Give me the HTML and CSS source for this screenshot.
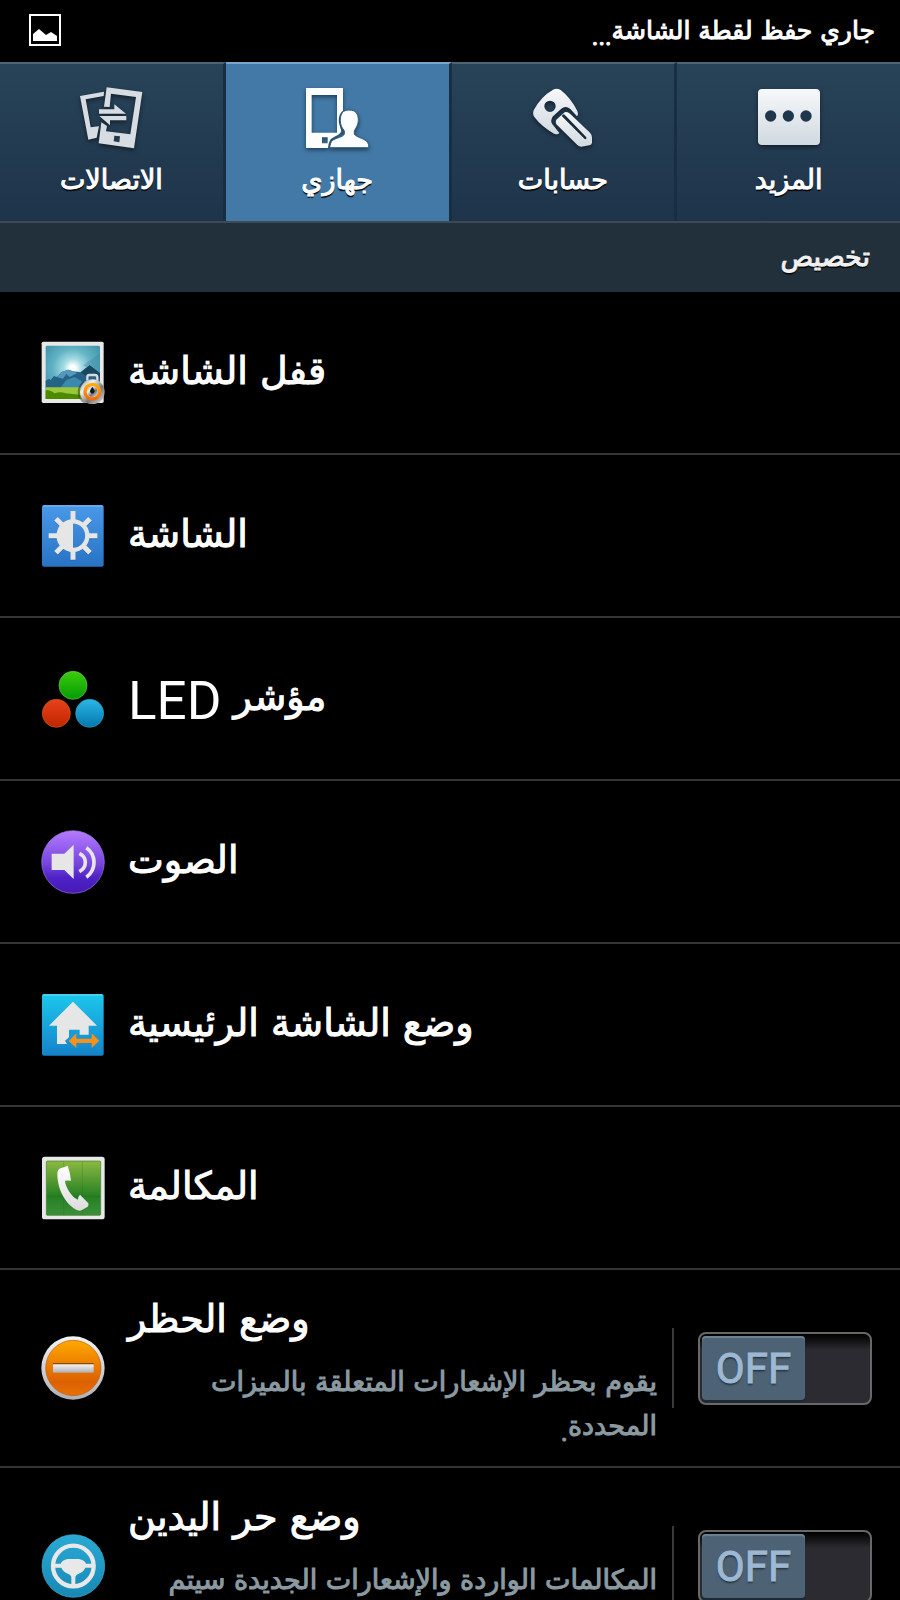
FILE: index.html
```html
<!DOCTYPE html>
<html lang="ar">
<head>
    <meta charset="UTF-8">
    <meta name="viewport" content="width=device-width, initial-scale=1.0">
    <title>الإعدادات - جهازي</title>
    <link rel="stylesheet" href="styles.css">
</head>
<body>
    <header class="status-bar">
        <svg class="status-icon" viewBox="0 0 32 32" aria-hidden="true">
            <rect x="1" y="1" width="30" height="30" fill="none" stroke="#fff" stroke-width="2"/>
            <path d="M4 27V20L10 15L17 21L22 18L28 22V27Z" fill="#fff"/>
        </svg>
        <span class="status-text" dir="rtl">جاري حفظ لقطة الشاشة<span class="punct">...</span></span>
    </header>

    <nav class="tabs" role="tablist">
        <button class="tab" role="tab" aria-selected="false">
            <svg class="tab-icon" viewBox="237 258 192 192" aria-hidden="true">
                <g fill="#d6dce1">
                    <path fill-rule="evenodd" d="M240 288L312 275L311 288L257 298L272 382L297 379L290 413L265 419Z"/>
                    <path d="M320 262L427 276L402 445L296 430L304 367L321 378L318 394L391 403L408 291L333 281L329 321L312 320Z"/>
                    <path d="M297 328H343V313L378 341H297Z"/>
                    <path d="M298 348H379V361H330V376Z"/>
                </g>
                <path d="M343 407L360 409L358 427L341 424Z" fill="#22394e"/>
            </svg>
            <span class="tab-label" dir="rtl">الاتصالات</span>
        </button>
        <button class="tab active" role="tab" aria-selected="true">
            <svg class="tab-icon" viewBox="912 258 192 192" aria-hidden="true">
                <path fill="#fbfdff" fill-rule="evenodd" d="M915 264H1026V332C1016 340 1012 352 1014 370L1021 393C1018 405 1000 408 989 418C984 426 982 434 981 444H915ZM932 285V398H1008V285ZM963 412V430H980V412Z"/>
                <path fill="#fbfdff" stroke="#2f5f86" stroke-width="3" d="M1044 330C1064 330 1072 341 1072 361C1072 377 1063 385 1060 393V402C1066 412 1085 414 1096 423C1102 429 1104 436 1103 443H986C988 433 989 425 996 420C1008 413 1024 412 1030 403V393C1024 384 1018 377 1018 361C1018 341 1026 330 1044 330Z"/>
            </svg>
            <span class="tab-label" dir="rtl">جهازي</span>
        </button>
        <button class="tab" role="tab" aria-selected="false">
            <svg class="tab-icon" viewBox="237 258 192 192" aria-hidden="true">
                <defs>
                    <linearGradient id="silver" x1="0" y1="0" x2="0" y2="1">
                        <stop offset="0" stop-color="#f7f8fa"/>
                        <stop offset="1" stop-color="#d0d9e0"/>
                    </linearGradient>
                </defs>
                <path fill="url(#silver)" fill-rule="evenodd" d="M303 269Q314 263 326 270Q355 292 376 333Q380 343 375 349L355 327Q341 316 328 326L303 349Q294 360 300 371L322 399Q317 405 306 401Q269 380 247 351Q241 342 245 331Q266 290 303 269ZM294 302A17 17 0 1 0 294 336A17 17 0 1 0 294 302Z"/>
                <path fill="url(#silver)" fill-rule="evenodd" d="M313 359L338 337Q346 333 354 341L414 398Q420 404 420 413V428Q419 434 412 436L388 440Q381 440 376 435L313 373Q309 366 313 359ZM329 348L398 417Q404 420 403 412L338 344Q333 341 329 348Z"/>
            </svg>
            <span class="tab-label" dir="rtl">حسابات</span>
        </button>
        <button class="tab" role="tab" aria-selected="false">
            <svg class="tab-icon" viewBox="917 258 192 192" aria-hidden="true">
                <rect x="920" y="267" width="186" height="168" rx="12" fill="url(#silver)"/>
                <g fill="#1f374c">
                    <circle cx="958" cy="348" r="17"/>
                    <circle cx="1011" cy="348" r="17"/>
                    <circle cx="1064" cy="348" r="17"/>
                </g>
            </svg>
            <span class="tab-label" dir="rtl">المزيد</span>
        </button>
    </nav>

    <main class="settings">
        <h2 class="section-title" dir="rtl">تخصيص</h2>

        <ul class="list">
            <li>
                <a class="row" href="#lock">
                    <svg class="icon" viewBox="64 69 192 192" aria-hidden="true">
                        <defs>
                            <radialGradient id="sky" cx="0.5" cy="0.42" r="0.6">
                                <stop offset="0.08" stop-color="#fff"/>
                                <stop offset="0.28" stop-color="#a5dce4"/>
                                <stop offset="0.6" stop-color="#62b3c4"/>
                                <stop offset="1" stop-color="#4497ae"/>
                            </radialGradient>
                            <linearGradient id="steel" x1="0" y1="0" x2="1" y2="1">
                                <stop offset="0" stop-color="#8c8c8c"/>
                                <stop offset="0.3" stop-color="#f2f2f2"/>
                                <stop offset="0.6" stop-color="#777"/>
                                <stop offset="1" stop-color="#e4e4e4"/>
                            </linearGradient>
                            <linearGradient id="ring" x1="0" y1="0" x2="0" y2="1">
                                <stop offset="0" stop-color="#ffac0c"/>
                                <stop offset="1" stop-color="#f66b00"/>
                            </linearGradient>
                        </defs>
                        <rect x="66" y="71" width="186" height="184" rx="5" fill="#e8e8e8"/>
                        <rect x="78" y="83" width="163" height="160" rx="4" fill="url(#sky)"/>
                        <path d="M190 142L241 106V170Z" fill="#3a87a0" opacity="0.4"/>
                        <path d="M78 188L88 182L92 187L103 174L112 177L126 162L145 155L160 160L183 163L210 142L241 166V210H78Z" fill="#256386"/>
                        <path d="M112 177L126 162L145 155L160 160L173 165L150 177L140 168L130 182Z" fill="#5499bb"/>
                        <path d="M140 186L165 177L190 193L205 180L213 210H122Z" fill="#3c88ae"/>
                        <path d="M183 163L210 142L241 166V182L222 166L203 177Z" fill="#1b4660"/>
                        <path d="M78 208H241V243H78Z" fill="#9bc83a"/>
                        <path d="M78 216Q95 217 105 226Q122 220 138 226L180 230V243H78Z" fill="#4e8a00"/>
                        <circle cx="213" cy="222" r="39" fill="#000" opacity="0.35"/>
                        <path d="M203 188V177Q203 171 209 171H226Q233 171 233 178V188" fill="none" stroke="#d5dadd" stroke-width="7"/>
                        <circle cx="218" cy="221" r="37" fill="url(#steel)"/>
                        <circle cx="218" cy="221" r="22" fill="#ddd" stroke="url(#ring)" stroke-width="10"/>
                        <circle cx="218" cy="221" r="16" fill="url(#steel)"/>
                        <path d="M218 206Q222 211 224 216A7 7 0 1 1 212 216Q214 211 218 206Z" fill="#161616"/>
                    </svg>
                    <span class="title" dir="rtl">قفل الشاشة</span>
                </a>
            </li>
            <li>
                <a class="row" href="#display">
                    <svg class="icon" viewBox="64 555 192 192" aria-hidden="true">
                        <defs>
                            <linearGradient id="blue" x1="0" y1="0" x2="0" y2="1">
                                <stop offset="0" stop-color="#4a99e8"/>
                                <stop offset="1" stop-color="#2873c4"/>
                            </linearGradient>
                        </defs>
                        <rect x="67" y="558" width="185" height="185" rx="6" fill="url(#blue)"/>
                        <path d="M71 561H248" stroke="#83b9f0" stroke-width="3"/>
                        <g stroke="#1c5591" stroke-width="15" transform="translate(0 3)" opacity="0.4">
                            <path d="M160 576V606M160 692V722M88 650H118M202 650H232M109 599L130 620M190 680L211 701M109 701L130 680M190 620L211 599"/>
                        </g>
                        <path d="M160 576V606M160 692V722M87 650H118M202 650H233M109 599L130 620M190 680L211 701M109 701L130 680M190 620L211 599" stroke="#e6e6e6" stroke-width="15"/>
                        <circle cx="160" cy="650" r="43" fill="none" stroke="#e6e6e6" stroke-width="13"/>
                        <path d="M160 606A44 44 0 0 0 160 694Z" fill="#e6e6e6"/>
                    </svg>
                    <span class="title" dir="rtl">الشاشة</span>
                </a>
            </li>
            <li>
                <a class="row" href="#led">
                    <svg class="icon" viewBox="64 84 192 192" aria-hidden="true">
                        <defs>
                            <linearGradient id="green" x1="0" y1="0" x2="0" y2="1">
                                <stop offset="0" stop-color="#3ccb0b"/>
                                <stop offset="1" stop-color="#049c05"/>
                            </linearGradient>
                            <linearGradient id="red" x1="0" y1="0" x2="0" y2="1">
                                <stop offset="0" stop-color="#e7421b"/>
                                <stop offset="1" stop-color="#c02500"/>
                            </linearGradient>
                            <linearGradient id="cyan" x1="0" y1="0" x2="0" y2="1">
                                <stop offset="0" stop-color="#2bb7e6"/>
                                <stop offset="1" stop-color="#0377ad"/>
                            </linearGradient>
                        </defs>
                        <circle cx="160" cy="139" r="42" fill="url(#green)" stroke="#68c94a" stroke-width="2"/>
                        <circle cx="110" cy="223" r="42" fill="url(#red)" stroke="#e0570a" stroke-width="2"/>
                        <circle cx="210" cy="223" r="42" fill="url(#cyan)" stroke="#2fa3b8" stroke-width="2"/>
                    </svg>
                    <span class="title" dir="rtl">مؤشر <span class="latin">LED</span></span>
                </a>
            </li>
            <li>
                <a class="row" href="#sound">
                    <svg class="icon" viewBox="64 571 192 192" aria-hidden="true">
                        <defs>
                            <linearGradient id="violet" x1="0" y1="0" x2="0" y2="1">
                                <stop offset="0" stop-color="#b57bff"/>
                                <stop offset="0.55" stop-color="#7442dc"/>
                                <stop offset="0.75" stop-color="#4e22c6"/>
                                <stop offset="1" stop-color="#4719b8"/>
                            </linearGradient>
                        </defs>
                        <circle cx="160" cy="667" r="94" fill="url(#violet)" stroke="#9a77e0" stroke-width="2"/>
                        <path d="M96 642H134L162 615V718L134 691H96Z" fill="#e6e6e6"/>
                        <path d="M179 641Q197 650 197 668Q197 686 179 696M200 624Q223 640 223 668Q223 696 200 713" fill="none" stroke="#e6e6e6" stroke-width="11"/>
                    </svg>
                    <span class="title" dir="rtl">الصوت</span>
                </a>
            </li>
            <li>
                <a class="row" href="#home">
                    <svg class="icon" viewBox="64 67 192 192" aria-hidden="true">
                        <defs>
                            <linearGradient id="aqua" x1="0" y1="0" x2="0" y2="1">
                                <stop offset="0" stop-color="#1cc8ec"/>
                                <stop offset="1" stop-color="#1582ca"/>
                            </linearGradient>
                        </defs>
                        <rect x="67" y="70" width="185" height="185" rx="6" fill="url(#aqua)"/>
                        <path d="M71 73H248" stroke="#6fdcf3" stroke-width="3"/>
                        <path d="M160 93L232 165H207V192H180V177H148V200L136 210L142 220H112V165H88Z" fill="#e6e6e6"/>
                        <path d="M147 211L170 188V204H216V188L239 210L216 232V217H170V232Z" fill="#f6911c"/>
                    </svg>
                    <span class="title" dir="rtl">وضع الشاشة الرئيسية</span>
                </a>
            </li>
            <li>
                <a class="row" href="#call">
                    <svg class="icon" viewBox="64 555 192 192" aria-hidden="true">
                        <defs>
                            <linearGradient id="leaf" x1="0" y1="0" x2="0" y2="1">
                                <stop offset="0" stop-color="#8cb941"/>
                                <stop offset="0.65" stop-color="#258023"/>
                                <stop offset="1" stop-color="#3c8f39"/>
                            </linearGradient>
                            <linearGradient id="phone" x1="0" y1="0" x2="0" y2="1">
                                <stop offset="0" stop-color="#fff"/>
                                <stop offset="1" stop-color="#dcdcdc"/>
                            </linearGradient>
                        </defs>
                        <rect x="67" y="557" width="188" height="188" rx="8" fill="#e8e8e8"/>
                        <rect x="80" y="570" width="163" height="163" rx="3" fill="url(#leaf)" stroke="#3f7d26" stroke-width="2"/>
                        <path d="M132 571V732M188 571V732M81 677H242" stroke="#1c5c1a" stroke-width="2" opacity="0.3"/>
                        <path d="M144 584Q136 587 123 592Q113 596 113 608C113 661 143 704 174 718Q181 721 187 717L204 707Q208 704 206 697L181 671Q175 676 175 686C156 679 137 647 136 629Q145 628 154 629Q152 605 144 584Z" fill="url(#phone)"/>
                    </svg>
                    <span class="title" dir="rtl">المكالمة</span>
                </a>
            </li>
            <li class="row tall">
                <svg class="icon" viewBox="123 224 192 192" aria-hidden="true">
                    <defs>
                        <linearGradient id="orange" x1="0" y1="0" x2="0" y2="1">
                            <stop offset="0" stop-color="#ffa900"/>
                            <stop offset="0.75" stop-color="#dc6000"/>
                            <stop offset="1" stop-color="#e77107"/>
                        </linearGradient>
                        <linearGradient id="rim" x1="0" y1="0" x2="0" y2="1">
                            <stop offset="0" stop-color="#f4f4f4"/>
                            <stop offset="1" stop-color="#aeb0b6"/>
                        </linearGradient>
                    </defs>
                    <circle cx="219" cy="320" r="95" fill="url(#rim)"/>
                    <circle cx="220" cy="320" r="83" fill="url(#orange)" stroke="#c05a10" stroke-width="2"/>
                    <rect x="159" y="305" width="122" height="5" fill="#8f4a05"/>
                    <rect x="159" y="309" width="122" height="25" fill="url(#rim)"/>
                </svg>
                <div class="text">
                    <span class="title" dir="rtl" id="blocking">وضع الحظر</span>
                    <p class="summary" dir="rtl">يقوم بحظر الإشعارات المتعلقة بالميزات المحددة<span class="punct">.</span></p>
                </div>
                <div class="switch-box">
                    <button class="switch" role="switch" aria-checked="false" aria-labelledby="blocking"><span class="thumb">OFF</span></button>
                </div>
            </li>
            <li class="row tall">
                <svg class="icon" viewBox="123 823 192 192" aria-hidden="true">
                    <defs>
                        <linearGradient id="teal" x1="0" y1="0" x2="0" y2="1">
                            <stop offset="0" stop-color="#2aa9d5"/>
                            <stop offset="1" stop-color="#1788b4"/>
                        </linearGradient>
                    </defs>
                    <circle cx="220" cy="919" r="94" fill="url(#teal)" stroke="#4aa9c7" stroke-width="2"/>
                    <circle cx="220" cy="919" r="61" fill="none" stroke="#e8e8e8" stroke-width="13"/>
                    <path d="M164 912H182Q186 901 203 898H237Q254 901 258 912H276V924H256Q250 937 236 942Q226 946 226 954V982H214V954Q214 946 204 942Q190 937 184 924H164Z" fill="#e8e8e8"/>
                </svg>
                <div class="text">
                    <span class="title" dir="rtl" id="handsfree">وضع حر اليدين</span>
                    <p class="summary" dir="rtl">المكالمات الواردة والإشعارات الجديدة سيتم</p>
                </div>
                <div class="switch-box">
                    <button class="switch" role="switch" aria-checked="false" aria-labelledby="handsfree"><span class="thumb">OFF</span></button>
                </div>
            </li>
        </ul>
    </main>
</body>
</html>
```
FILE: styles.css
```css
* {
    box-sizing: border-box;
}
body {
    margin: 0;
    height: 100vh;
    overflow: hidden;
    background: #000;
    color: #fff;
    font-family: "DejaVu Sans", sans-serif;
    -webkit-text-stroke: 1px;
}
.status-bar {
    display: flex;
    align-items: center;
    justify-content: space-between;
    height: 62px;
    padding: 0 25px 2px 29px;
}
.status-icon {
    width: 32px;
    height: 32px;
}
.status-text {
    font-size: 25px;
}
.punct {
    font-family: Roboto, sans-serif;
    line-height: 0;
    vertical-align: sub;
}
.tabs {
    display: flex;
    height: 161px;
    border-bottom: 2px solid #3c4a56;
}
.tab {
    flex: 1;
    display: flex;
    flex-direction: column;
    align-items: center;
    gap: 10px;
    padding: 22px 0 0;
    border: 0;
    border-top: 2px solid #4d6475;
    border-right: 3px solid #182e42;
    background: linear-gradient(#284358, #1e344b);
    color: #fff;
    font-family: inherit;
    font-size: 27px;
}
.tab:last-child {
    border-right: 0;
}
.tab.active {
    background: #4279a7;
    border-top-color: #7ea5c6;
}
.tab-icon {
    width: 64px;
    height: 64px;
    filter: drop-shadow(0 2px 2px rgba(0,0,0,0.5));
}
.tab-label {
    line-height: 40px;
    text-shadow: 0 2px 1px #000;
}
.section-title {
    margin: 0;
    height: 69px;
    padding: 0 30px;
    background: #22303c;
    color: #f0f0f0;
    font-size: 27px;
    font-weight: normal;
    line-height: 68px;
    text-shadow: 0 2px 1px #000;
}
.list {
    list-style: none;
    margin: 0;
    padding: 0;
}
.row {
    display: flex;
    align-items: center;
    gap: 23px;
    min-height: 163px;
    padding: 0 28px 0 41px;
    border-bottom: 2px solid #353535;
    color: #fff;
    text-decoration: none;
}
.icon {
    flex: none;
    width: 64px;
    height: 64px;
}
.title {
    padding-bottom: 3px;
    font-size: 38px;
    line-height: 60px;
}
.latin {
    font-family: Roboto, sans-serif;
    font-size: 53px;
    line-height: 0;
    vertical-align: sub;
    -webkit-text-stroke: 0;
}
.tall {
    min-height: 198px;
}
.text {
    flex: 1;
    align-self: flex-start;
    padding-top: 19px;
}
.text .title {
    display: block;
    text-align: left;
}
.summary {
    margin: 8px 0 0;
    color: #8b9aa1;
    font-size: 27px;
    line-height: 44px;
}
.switch-box {
    display: flex;
    align-items: center;
    height: 80px;
    margin-left: -8px;
    padding-left: 24px;
    border-left: 2px solid #3a3a3a;
}
.switch {
    display: flex;
    width: 174px;
    height: 73px;
    padding: 2px;
    border: 2px solid #686868;
    border-radius: 8px;
    background: linear-gradient(#000, #2b2b31 16px);
}
.thumb {
    width: 103px;
    height: 64px;
    border-radius: 4px;
    background: #4d6375;
    box-shadow: inset 0 2px 1px #6d8293, 0 2px 1px #1c2a35;
    color: #9db8d3;
    font-family: Roboto, sans-serif;
    font-size: 42px;
    line-height: 66px;
    text-align: center;
    text-shadow: 0 2px 2px #23303b;
}
```
